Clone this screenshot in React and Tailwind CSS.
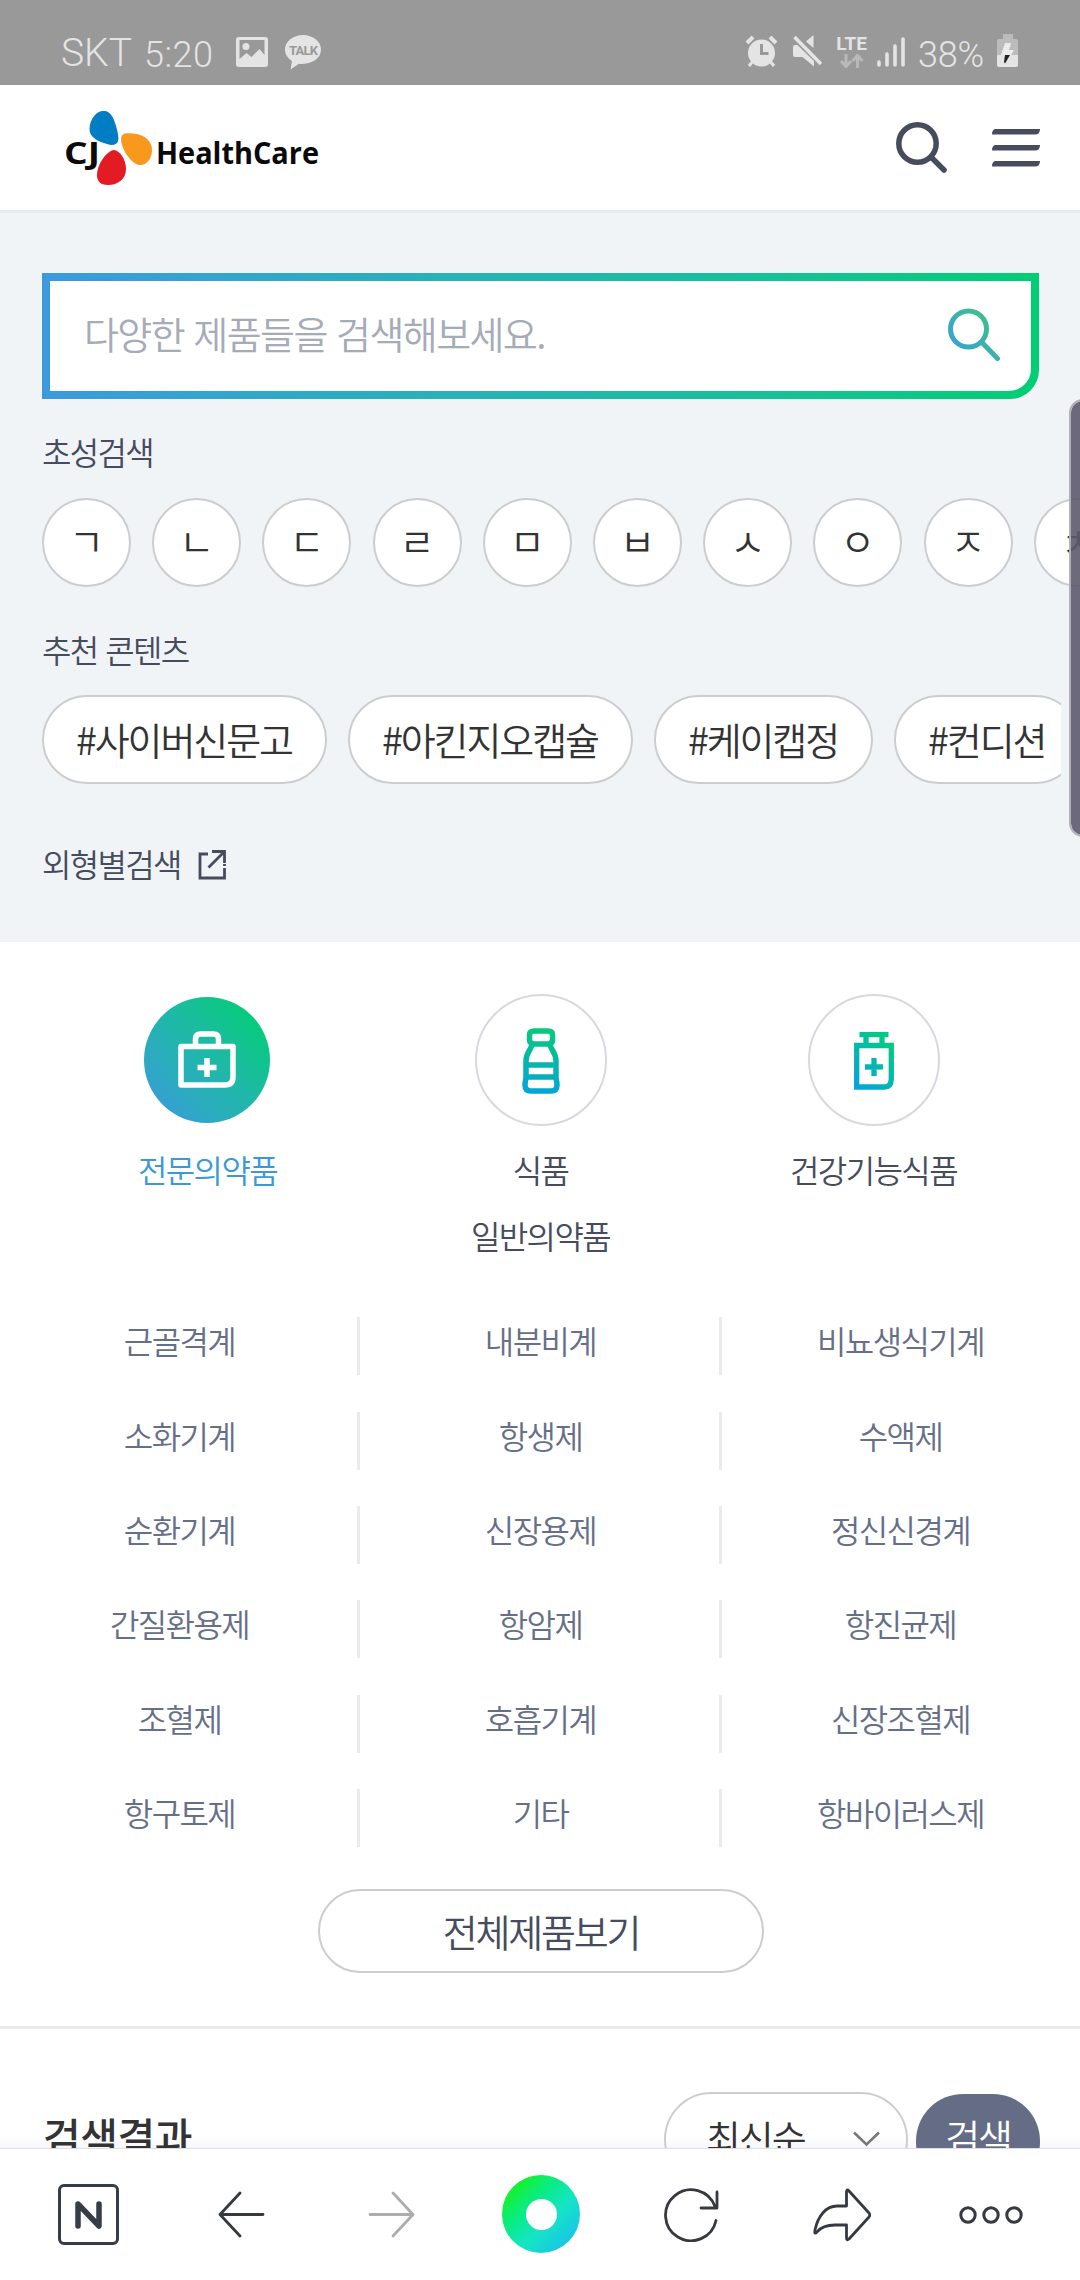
import { clsx } from "clsx";

const CONSONANTS = ["ㄱ", "ㄴ", "ㄷ", "ㄹ", "ㅁ", "ㅂ", "ㅅ", "ㅇ", "ㅈ", "ㅊ"];

const TAGS = ["#사이버신문고", "#아킨지오캡슐", "#케이캡정", "#컨디션"];

const PRODUCT_ROWS = [
  ["근골격계", "내분비계", "비뇨생식기계"],
  ["소화기계", "항생제", "수액제"],
  ["순환기계", "신장용제", "정신신경계"],
  ["간질환용제", "항암제", "항진균제"],
  ["조혈제", "호흡기계", "신장조혈제"],
  ["항구토제", "기타", "항바이러스제"]
];

function StatusBar() {
  return (
    <div className="h-[85px] bg-[#999999] text-[#e4e4e4] flex justify-between pl-[61px] pr-[62px] pt-[34px] font-[Roboto,'Noto_Sans_CJK_KR',sans-serif]">
      <div className="flex items-start">
        <span className="w-[83px] text-[39px] leading-[39px] font-[350]">SKT</span>
        <span className="w-[92px] text-[36px] leading-[42px] tracking-[0.500px] font-[350]">5:20</span>
        <svg className="mt-[3px]" width="32" height="30" viewBox="0 0 32 30">
          <path
            fillRule="evenodd"
            fill="#e4e4e4"
            d="M3 0h26a3 3 0 0 1 3 3v24a3 3 0 0 1-3 3H3a3 3 0 0 1-3-3V3a3 3 0 0 1 3-3Zm.5 3v19l7-6 5 4 8-8 5 6V3ZM10 6a3.5 3.5 0 1 1 0 7 3.5 3.5 0 0 1 0-7Z"
          />
        </svg>
        <div className="relative ml-[17px]">
          <svg width="36" height="36" viewBox="0 0 36 36">
            <path fill="#e4e4e4" d="M18 1C8 1 0 7.500 0 15.500 0 20.500 3 24.500 7 27L5.500 35.500 14 29.700C26 31 36 25 36 15.500 36 7.500 28 1 18 1Z" />
          </svg>
          <span className="absolute left-0 top-[9px] w-9 text-center text-[13px] leading-[15px] tracking-[-0.800px] font-bold text-[#999999]">TALK</span>
        </div>
      </div>
      <div className="flex items-start">
        <svg width="33" height="34" viewBox="0 0 33 34">
          <path d="M2 9l6-6M31 9l-6-6" stroke="#e4e4e4" strokeWidth="4" />
          <circle cx="16.500" cy="19" r="13.500" fill="#e4e4e4" />
          <path d="M8 27l-4 5M25 27l4 5" stroke="#e4e4e4" strokeWidth="3" />
          <path d="M16.500 10v9.500h7" stroke="#999999" strokeWidth="3" fill="none" />
        </svg>
        <svg className="ml-[15px]" width="29" height="34" viewBox="0 0 29 34">
          <path fill="#e4e4e4" d="M0 13q0-2 2-2h2.500L21 27v5.500L9.500 23H2q-2 0-2-2ZM20.500 1v13L13 7.500Z" />
          <path d="M1.500 3l26.500 27" stroke="#e4e4e4" strokeWidth="3.500" />
        </svg>
        <div className="ml-[14px] flex flex-col items-center">
          <span className="text-[19px] leading-[19px] font-bold">LTE</span>
          <svg className="mt-px" width="24" height="14" viewBox="0 0 24 14" fill="none" stroke="#b9b9b9" strokeWidth="3">
            <path d="M6 0v12M1 7l5 5.500L11 7M17.500 14V2M12.500 7l5-5.500 5 5.500" />
          </svg>
        </div>
        <svg className="ml-[10px]" width="28" height="34" viewBox="0 0 28 34" stroke="#e4e4e4" strokeWidth="3.600" strokeLinecap="round">
          <path d="M2 28v3M10 20v11M18 12v19M26 5v26" />
        </svg>
        <span className="ml-[13px] w-[79px] text-[36px] leading-[42px] tracking-[-0.200px] font-[350] whitespace-nowrap">38%</span>
        <svg width="21" height="34" viewBox="0 0 21 34">
          <path fill="#bcbcbc" d="M6 0h10v5h3q2 0 2 2v14H0V7q0-2 2-2h4Z" />
          <path fill="#e4e4e4" d="M0 21h21v10a2 2 0 0 1-2 2H2a2 2 0 0 1-2-2Z" />
          <path fill="#ececec" d="M8 9h6l-2 7h5l-3 5H4Z" />
          <path fill="#222" d="M8 21h5L8 29.500 7 28Z" />
        </svg>
      </div>
    </div>
  );
}

function Logo() {
  return (
    <svg width="256" height="76" viewBox="64 110 256 76" role="img" aria-label="CJ HealthCare">
      <path fill="#007dc5" d="M103 111C110 110 114 118 116 126C118 133 119 138 118 141C117 145 112 146 107 144C99 142 89 137 89.500 129C90 118 97 111 103 111Z" />
      <path fill="#f8991d" d="M121 139C121 132 129 133 137 134C146 136 152 142 152 150C152 159 146 166 139 165C130 163 121 148 121 139Z" />
      <path fill="#e31b23" d="M113 150C119 149 126 159 126 169C126 179 118 185 108 185C100 185 97 181 97 175C97 165 105 153 113 150Z" />
      <g fill="#0a0a0a" fontFamily="'Open Sans', sans-serif" fontWeight="700">
        <text x="64" y="164" fontSize="30" textLength="36" lengthAdjust="spacingAndGlyphs">CJ</text>
        <text x="156" y="164" fontSize="30" textLength="163" lengthAdjust="spacingAndGlyphs">HealthCare</text>
      </g>
    </svg>
  );
}

function Header() {
  return (
    <header className="h-[128px] bg-white border-b-3 border-[#ebebeb] flex items-start pl-16 pr-10">
      <div className="mt-[25px]">
        <Logo />
      </div>
      <svg className="ml-auto mt-[36px]" width="53" height="53" viewBox="0 0 53 53" fill="none" stroke="#464c5e">
        <circle cx="21.500" cy="22.500" r="18.700" strokeWidth="5.500" />
        <path d="M36 37l12 12" strokeWidth="5.500" strokeLinecap="round" />
      </svg>
      <svg className="ml-[43px] mt-[44px]" width="48" height="38" viewBox="0 0 48 38" fill="#464c5e">
        <path d="M4 0h44q0 5.500-5 5.500H0q0-5.500 4-5.500ZM4 16h44q0 5.500-5 5.500H0q0-5.500 4-5.500ZM4 32h44q0 5.500-5 5.500H0q0-5.500 4-5.500Z" />
      </svg>
    </header>
  );
}

function SearchPanel() {
  return (
    <section className="h-[729px] bg-[#f0f4f7] pl-[42px] pt-[60px] overflow-hidden">
      <div className="w-[997px] h-[126px] p-2 rounded-br-[29px] bg-linear-to-r from-[#3b9ade] to-[#00ce74]">
        <div className="h-full bg-white rounded-br-[22px] flex items-center justify-between pl-[34px] pr-[30px]">
          <span className="-mt-[6px] text-[38px] leading-[54px] tracking-[-1.600px] [word-spacing:2.400px] text-[#a5abb7]">다양한 제품들을 검색해보세요.</span>
          <svg className="-mt-[2px]" width="53" height="54" viewBox="0 0 53 54" fill="none" stroke="url(#searchStroke)">
            <defs>
              <linearGradient id="searchStroke" gradientUnits="userSpaceOnUse" x1="6" y1="36" x2="38" y2="6">
                <stop offset="0" stopColor="#35a4cf" />
                <stop offset="1" stopColor="#3fc088" />
              </linearGradient>
            </defs>
            <circle cx="20.500" cy="21" r="18" strokeWidth="5" />
            <path d="M35 35.500l14.500 15" strokeWidth="5" strokeLinecap="round" />
          </svg>
        </div>
      </div>

      <h3 className="mt-[29px] text-[32px] leading-[46px] tracking-[-1.700px] text-[#464c5e]">초성검색</h3>
      <div className="mt-[24px] flex gap-[21.200px]">
        {CONSONANTS.map((letter) => (
          <button
            key={letter}
            className="size-[89px] shrink-0 rounded-full bg-white border-2 border-[#cdcdcf] text-[38px] leading-[54px] text-[#333335] pb-[6px]"
          >
            {letter}
          </button>
        ))}
      </div>

      <h3 className="mt-[39px] text-[32px] leading-[46px] tracking-[-1.700px] [word-spacing:2.400px] text-[#464c5e]">추천 콘텐츠</h3>
      <div className="mt-[23px] w-[1019px] flex gap-[21px] overflow-hidden">
        {TAGS.map((tag) => (
          <button
            key={tag}
            className="h-[89px] shrink-0 rounded-full bg-white border-2 border-[#cdcdcf] pl-[32px] pr-[33px] pb-[2px] text-[38px] leading-[54px] tracking-[-2.100px] text-[#333335]"
          >
            {tag}
          </button>
        ))}
      </div>

      <div className="mt-[56px] flex items-start text-[#464c5e]">
        <span className="text-[32px] leading-[46px] tracking-[-1.700px]">외형별검색</span>
        <svg className="ml-[17px] mt-[10px]" width="28" height="30" viewBox="0 0 28 30" fill="none" stroke="#464c5e" strokeWidth="2.800">
          <path d="M10 4H2v24h24.500V18M26.500 16v-2" />
          <path d="M14 1.500h12.500V13M26 2L10.500 17.500" />
        </svg>
      </div>
    </section>
  );
}

function CategoryIcon({ type }) {
  if (type === "prescription") {
    return (
      <svg width="58" height="58" viewBox="0 0 58 58" fill="none" stroke="#fff" strokeWidth="5.500" strokeLinejoin="round">
        <path d="M3 15.500h52V46q0 8-8 8H3Z" />
        <path d="M17.500 15V8q0-5 5-5h13q5 0 5 5v7" />
        <path d="M29 27v19M19.500 36.500h19" />
      </svg>
    );
  }
  if (type === "food") {
    return (
      <svg className="mt-[2px]" width="38" height="66" viewBox="0 0 38 66" fill="none" stroke="url(#bottleStroke)" strokeWidth="5.500">
        <defs>
          <linearGradient id="bottleStroke" gradientUnits="userSpaceOnUse" x1="22" y1="4" x2="14" y2="64">
            <stop offset="0" stopColor="#08c77f" />
            <stop offset="1" stopColor="#04a5d6" />
          </linearGradient>
        </defs>
        <path d="M12 3h14q4.500 0 4.500 4v4.500q0 4.500-4.500 4.500H12q-4.500 0-4.500-4.500V7q0-4 4.500-4Z" />
        <path d="M10 16C10 21 4 24 4 33v16C4 53 3 52 3 57q0 6 6 6h20q6 0 6-6c0-5-1-4-1-8V33C34 24 28 21 28 16" />
        <path d="M4 37h30M4 49h30" />
      </svg>
    );
  }
  return (
    <svg className="ml-px mt-px" width="40" height="58" viewBox="0 0 40 58" fill="none" stroke="url(#jarStroke)" strokeWidth="5.300">
      <defs>
        <linearGradient id="jarStroke" gradientUnits="userSpaceOnUse" x1="0" y1="50" x2="36" y2="12">
          <stop offset="0" stopColor="#04a5d6" />
          <stop offset="1" stopColor="#04c985" />
        </linearGradient>
      </defs>
      <path d="M2.700 13.500h34.600V47q0 8-7 8H2.700Z" />
      <path d="M5.500 2.700L34.500 2.600M12 3v10M28 3v10" />
      <path d="M20 26v18M11 35L29 34.900" />
    </svg>
  );
}

function Category({ type, labels, active }) {
  return (
    <div className="w-[333px] flex flex-col items-center">
      <div className="h-[132px] flex items-center">
        <div
          className={clsx(
            "rounded-full flex items-center justify-center",
            active
              ? "mr-[2px] size-[126px] bg-linear-to-tr from-[#34a1d0] from-15% to-[#06ca7c] to-85%"
              : "size-[132px] bg-white border-2 border-[#d6d9df]"
          )}
        >
          <CategoryIcon type={type} />
        </div>
      </div>
      <div
        className={clsx(
          "mt-[10px] text-center text-[32px] leading-[66px] tracking-[-1.600px]",
          active ? "text-[#3b9ad6]" : "text-[#464c5e]"
        )}
      >
        {labels.map((label) => (
          <p key={label}>{label}</p>
        ))}
      </div>
    </div>
  );
}

function Products() {
  return (
    <section className="h-[1087px] bg-white border-b-3 border-[#ebebeb] pt-[52px]">
      <div className="h-[305px] flex pl-[41px]">
        <Category type="prescription" labels={["전문의약품"]} active />
        <Category type="food" labels={["식품", "일반의약품"]} />
        <Category type="supplement" labels={["건강기능식품"]} />
      </div>
      <div>
        {PRODUCT_ROWS.map((row) => (
          <div key={row[0]} className="h-[94.400px] grid grid-cols-[360px_362px_358px] items-center">
            {row.map((name, index) => (
              <div key={name} className={clsx("h-[58px] flex justify-center", index < 2 ? "pl-[2px] border-r-3 border-[#ebebeb]" : "pr-px")}>
                <span className="text-[32px] leading-[46px] tracking-[-1.600px] text-[#666f88]">{name}</span>
              </div>
            ))}
          </div>
        ))}
      </div>
      <button className="mt-[24px] ml-[318px] block w-[446px] h-[84px] rounded-full border-2 border-[#cdcdcf] text-[38px] leading-[54px] tracking-[-2.200px] text-[#464c5e]">
        전체제품보기
      </button>
    </section>
  );
}

function Results() {
  return (
    <section className="h-[119px] overflow-hidden bg-linear-to-b from-white from-90% to-[#f6f7fa] flex items-start pl-[43px] pr-10">
      <h2 className="mt-[76px] text-[41px] leading-[60px] tracking-[-0.500px] font-medium text-[#333335]">검색결과</h2>
      <div className="ml-auto mt-[63px] w-[244px] h-[95px] rounded-full border-2 border-[#cdcdcf] flex items-start justify-between pl-[40px] pr-[26px]">
        <span className="mt-[16px] text-[38px] leading-[54px] tracking-[-2.100px] text-[#333335]">최신순</span>
        <svg className="mt-[37px]" width="27" height="16" viewBox="0 0 27 16" fill="none" stroke="#777" strokeWidth="2.500">
          <path d="M1 1.500l12.500 12L26 1.500" />
        </svg>
      </div>
      <button className="ml-2 mt-[65px] w-[124px] h-[95px] rounded-[47px] bg-[#646d85] flex items-start justify-center text-[38px] leading-[54px] tracking-[-2.100px] text-white pt-[15px]">
        검색
      </button>
    </section>
  );
}

function BrowserBar() {
  return (
    <nav className="h-[132px] bg-white border-t border-[#dfdfe1] flex items-start pl-[58px]">
      <div className="mt-[35px] size-[61px] rounded-[6px] border-3 border-[#363d46] flex items-center justify-center">
        <svg width="27" height="28" viewBox="0 0 27 28" fill="none" stroke="#363d46" strokeWidth="5.500" strokeLinecap="round" strokeLinejoin="round">
          <path d="M3 25V3l21 22V3" />
        </svg>
      </div>
      <svg className="ml-[99px] mt-[42px]" width="47" height="47" viewBox="0 0 47 47" fill="none" stroke="#363940" strokeWidth="2.800" strokeLinecap="round" strokeLinejoin="round">
        <path d="M22 2L2 23.500 22 45M2 23.500h43" />
      </svg>
      <svg className="ml-[103px] mt-[42px]" width="47" height="47" viewBox="0 0 47 47" fill="none" stroke="#adadaf" strokeWidth="2.800" strokeLinecap="round" strokeLinejoin="round">
        <path d="M25 2l20 21.500L25 45M45 23.500H2" />
      </svg>
      <div className="ml-[87px] mt-[26px] size-[78px] rounded-full bg-linear-135 from-[#14f038] from-20% via-[#17e4c4] via-60% to-[#25b4f5] flex items-center justify-center">
        <div className="size-[31px] rounded-full bg-white" />
      </div>
      <svg className="ml-[84px] mt-[37px]" width="55" height="56" viewBox="0 0 55 56" fill="none" stroke="#363940" strokeWidth="2.800" strokeLinecap="round" strokeLinejoin="round">
        <path d="M52 34.500A25.500 25.500 0 1 1 51 20.500M53 6v16H37" />
      </svg>
      <svg className="ml-[94px] mt-[39px]" width="58" height="54" viewBox="0 0 58 54" fill="none" stroke="#363940" strokeWidth="2.800" strokeLinecap="round" strokeLinejoin="round">
        <path d="M33.500 18V4q0-3.500 2.500-1L56 25q1.500 2 0 4L36 51q-2.500 2-2.500-1V37H22C14 37 8 39 4 44Q1 47 2 42C5 28 13 18 24 18Z" />
      </svg>
      <svg className="ml-[88px] mt-[57px]" width="64" height="18" viewBox="0 0 64 18" fill="none" stroke="#363940" strokeWidth="3">
        <circle cx="9" cy="9" r="7.200" />
        <circle cx="32" cy="9" r="7.200" />
        <circle cx="55" cy="9" r="7.200" />
      </svg>
    </nav>
  );
}

export default function App() {
  return (
    <div className="relative w-[1080px] h-[2280px] overflow-hidden bg-white font-[350] font-['Noto_Sans_CJK_KR',sans-serif]">
      <StatusBar />
      <Header />
      <SearchPanel />
      <Products />
      <Results />
      <BrowserBar />
      {/* edge panel handle */}
      <div className="absolute top-[399px] left-[1069px] w-6 h-[438px] rounded-l-[14px] border-2 border-[#b0b0b5] bg-[#5c5a6d]/90 bg-clip-padding" />
    </div>
  );
}
